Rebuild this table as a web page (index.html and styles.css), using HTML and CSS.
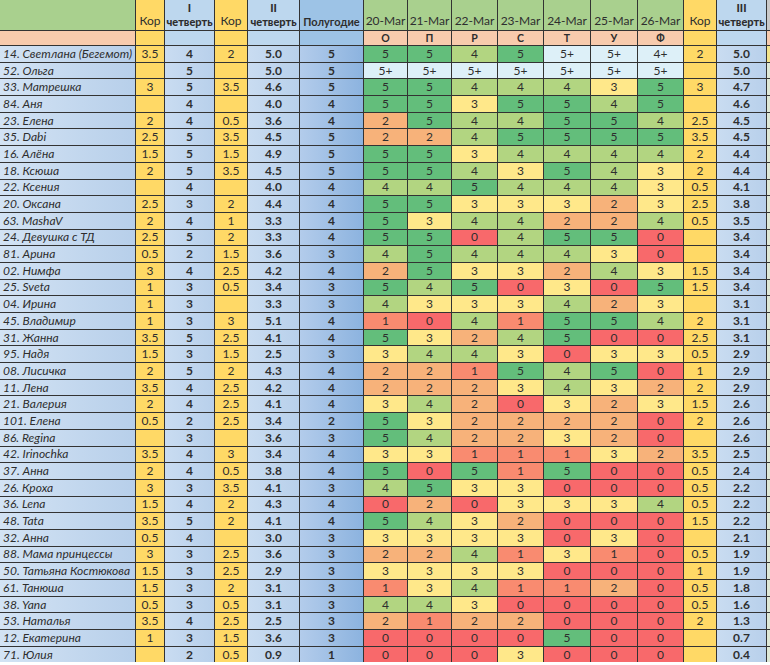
FILE: index.html
```html
<!DOCTYPE html>
<html lang="ru">
<head>
<meta charset="utf-8">
<title>Оценки</title>
<link rel="stylesheet" href="styles.css">
</head>
<body>
<div class="sheet">
<div class="c hn"></div><div class="c hk">Кор</div><div class="c hq"><b>I</b><b>четверть</b></div><div class="c hk">Кор</div><div class="c hq"><b>II</b><b>четверть</b></div><div class="c hp">Полугодие</div><div class="c hd">20-Mar</div><div class="c hd">21-Mar</div><div class="c hd">22-Mar</div><div class="c hd">23-Mar</div><div class="c hd">24-Mar</div><div class="c hd">25-Mar</div><div class="c hd">26-Mar</div><div class="c hk">Кор</div><div class="c hq"><b>III</b><b>четверть</b></div><div class="c hx"></div>
<div class="c on"></div><div class="c ok"></div><div class="c oq"></div><div class="c ok"></div><div class="c oq"></div><div class="c op"></div><div class="c ol">О</div><div class="c ol">П</div><div class="c ol">Р</div><div class="c ol">С</div><div class="c ol">Т</div><div class="c ol">У</div><div class="c ol">Ф</div><div class="c ok"></div><div class="c oq"></div><div class="c ox"></div>

<div class="c n">14. Светлана (Бегемот)</div><div class="c k">3.5</div><div class="c q">4</div><div class="c k">2</div><div class="c q">5.0</div><div class="c p">5</div><div class="c s5">5</div><div class="c s5">5</div><div class="c s4">4</div><div class="c s5">5</div><div class="c sp">5+</div><div class="c sp">5+</div><div class="c sp">4+</div><div class="c k">2</div><div class="c q">5.0</div><div class="c x y"></div>
<div class="c n">52. Ольга</div><div class="c k"></div><div class="c q">5</div><div class="c k"></div><div class="c q">5.0</div><div class="c p">5</div><div class="c sp">5+</div><div class="c sp">5+</div><div class="c sp">5+</div><div class="c sp">5+</div><div class="c sp">5+</div><div class="c sp">5+</div><div class="c sp">5+</div><div class="c k"></div><div class="c q">5.0</div><div class="c x"></div>
<div class="c n">33. Матрешка</div><div class="c k">3</div><div class="c q">5</div><div class="c k">3.5</div><div class="c q">4.6</div><div class="c p">5</div><div class="c s5">5</div><div class="c s5">5</div><div class="c s4">4</div><div class="c s4">4</div><div class="c s4">4</div><div class="c s3">3</div><div class="c s5">5</div><div class="c k">3</div><div class="c q">4.7</div><div class="c x"></div>
<div class="c n">84. Аня</div><div class="c k"></div><div class="c q">4</div><div class="c k"></div><div class="c q">4.0</div><div class="c p">4</div><div class="c s5">5</div><div class="c s5">5</div><div class="c s3">3</div><div class="c s5">5</div><div class="c s5">5</div><div class="c s4">4</div><div class="c s5">5</div><div class="c k"></div><div class="c q">4.6</div><div class="c x"></div>
<div class="c n">23. Елена</div><div class="c k">2</div><div class="c q">4</div><div class="c k">0.5</div><div class="c q">3.6</div><div class="c p">4</div><div class="c s2">2</div><div class="c s5">5</div><div class="c s4">4</div><div class="c s4">4</div><div class="c s5">5</div><div class="c s5">5</div><div class="c s4">4</div><div class="c k">2.5</div><div class="c q">4.5</div><div class="c x"></div>
<div class="c n">35. Dabi</div><div class="c k">2.5</div><div class="c q">5</div><div class="c k">3.5</div><div class="c q">4.5</div><div class="c p">5</div><div class="c s2">2</div><div class="c s2">2</div><div class="c s4">4</div><div class="c s5">5</div><div class="c s5">5</div><div class="c s5">5</div><div class="c s5">5</div><div class="c k">3.5</div><div class="c q">4.5</div><div class="c x"></div>
<div class="c n">16. Алёна</div><div class="c k">1.5</div><div class="c q">5</div><div class="c k">1.5</div><div class="c q">4.9</div><div class="c p">5</div><div class="c s5">5</div><div class="c s5">5</div><div class="c s3">3</div><div class="c s4">4</div><div class="c s4">4</div><div class="c s4">4</div><div class="c s4">4</div><div class="c k">2</div><div class="c q">4.4</div><div class="c x"></div>
<div class="c n">18. Ксюша</div><div class="c k">2</div><div class="c q">5</div><div class="c k">3.5</div><div class="c q">4.5</div><div class="c p">5</div><div class="c s5">5</div><div class="c s5">5</div><div class="c s4">4</div><div class="c s3">3</div><div class="c s5">5</div><div class="c s4">4</div><div class="c s3">3</div><div class="c k">2</div><div class="c q">4.4</div><div class="c x"></div>
<div class="c n">22. Ксения</div><div class="c k"></div><div class="c q">4</div><div class="c k"></div><div class="c q">4.0</div><div class="c p">4</div><div class="c s4">4</div><div class="c s4">4</div><div class="c s5">5</div><div class="c s4">4</div><div class="c s4">4</div><div class="c s4">4</div><div class="c s3">3</div><div class="c k">0.5</div><div class="c q">4.1</div><div class="c x"></div>
<div class="c n">20. Оксана</div><div class="c k">2.5</div><div class="c q">3</div><div class="c k">2</div><div class="c q">4.4</div><div class="c p">4</div><div class="c s5">5</div><div class="c s5">5</div><div class="c s3">3</div><div class="c s3">3</div><div class="c s3">3</div><div class="c s2">2</div><div class="c s3">3</div><div class="c k">2.5</div><div class="c q">3.8</div><div class="c x"></div>
<div class="c n">63. MashaV</div><div class="c k">2</div><div class="c q">4</div><div class="c k">1</div><div class="c q">3.3</div><div class="c p">4</div><div class="c s5">5</div><div class="c s3">3</div><div class="c s4">4</div><div class="c s4">4</div><div class="c s2">2</div><div class="c s2">2</div><div class="c s4">4</div><div class="c k">0.5</div><div class="c q">3.5</div><div class="c x"></div>
<div class="c n">24. Девушка с ТД</div><div class="c k">2.5</div><div class="c q">5</div><div class="c k">2</div><div class="c q">3.3</div><div class="c p">4</div><div class="c s5">5</div><div class="c s5">5</div><div class="c s0">0</div><div class="c s4">4</div><div class="c s5">5</div><div class="c s5">5</div><div class="c s0">0</div><div class="c k"></div><div class="c q">3.4</div><div class="c x"></div>
<div class="c n">81. Арина</div><div class="c k">0.5</div><div class="c q">2</div><div class="c k">1.5</div><div class="c q">3.6</div><div class="c p">3</div><div class="c s4">4</div><div class="c s5">5</div><div class="c s4">4</div><div class="c s4">4</div><div class="c s4">4</div><div class="c s3">3</div><div class="c s0">0</div><div class="c k"></div><div class="c q">3.4</div><div class="c x"></div>
<div class="c n">02. Нимфа</div><div class="c k">3</div><div class="c q">4</div><div class="c k">2.5</div><div class="c q">4.2</div><div class="c p">4</div><div class="c s2">2</div><div class="c s5">5</div><div class="c s3">3</div><div class="c s3">3</div><div class="c s2">2</div><div class="c s4">4</div><div class="c s3">3</div><div class="c k">1.5</div><div class="c q">3.4</div><div class="c x"></div>
<div class="c n">25. Sveta</div><div class="c k">1</div><div class="c q">3</div><div class="c k">0.5</div><div class="c q">3.4</div><div class="c p">3</div><div class="c s5">5</div><div class="c s4">4</div><div class="c s5">5</div><div class="c s0">0</div><div class="c s3">3</div><div class="c s0">0</div><div class="c s5">5</div><div class="c k">1.5</div><div class="c q">3.4</div><div class="c x"></div>
<div class="c n">04. Ирина</div><div class="c k">1</div><div class="c q">3</div><div class="c k"></div><div class="c q">3.3</div><div class="c p">3</div><div class="c s4">4</div><div class="c s3">3</div><div class="c s3">3</div><div class="c s3">3</div><div class="c s4">4</div><div class="c s2">2</div><div class="c s3">3</div><div class="c k"></div><div class="c q">3.1</div><div class="c x"></div>
<div class="c n">45. Владимир</div><div class="c k">1</div><div class="c q">3</div><div class="c k">3</div><div class="c q">5.1</div><div class="c p">4</div><div class="c s1">1</div><div class="c s0">0</div><div class="c s4">4</div><div class="c s1">1</div><div class="c s5">5</div><div class="c s5">5</div><div class="c s4">4</div><div class="c k">2</div><div class="c q">3.1</div><div class="c x"></div>
<div class="c n">31. Жанна</div><div class="c k">3.5</div><div class="c q">5</div><div class="c k">2.5</div><div class="c q">4.1</div><div class="c p">4</div><div class="c s5">5</div><div class="c s3">3</div><div class="c s2">2</div><div class="c s4">4</div><div class="c s5">5</div><div class="c s0">0</div><div class="c s0">0</div><div class="c k">2.5</div><div class="c q">3.1</div><div class="c x"></div>
<div class="c n">95. Надя</div><div class="c k">1.5</div><div class="c q">3</div><div class="c k">1.5</div><div class="c q">2.5</div><div class="c p">3</div><div class="c s3">3</div><div class="c s4">4</div><div class="c s4">4</div><div class="c s3">3</div><div class="c s0">0</div><div class="c s3">3</div><div class="c s3">3</div><div class="c k">0.5</div><div class="c q">2.9</div><div class="c x"></div>
<div class="c n">08. Лисичка</div><div class="c k">2</div><div class="c q">5</div><div class="c k">2</div><div class="c q">4.3</div><div class="c p">4</div><div class="c s2">2</div><div class="c s2">2</div><div class="c s1">1</div><div class="c s5">5</div><div class="c s4">4</div><div class="c s5">5</div><div class="c s0">0</div><div class="c k">1</div><div class="c q">2.9</div><div class="c x"></div>
<div class="c n">11. Лена</div><div class="c k">3.5</div><div class="c q">4</div><div class="c k">2.5</div><div class="c q">4.2</div><div class="c p">4</div><div class="c s2">2</div><div class="c s2">2</div><div class="c s2">2</div><div class="c s3">3</div><div class="c s4">4</div><div class="c s3">3</div><div class="c s2">2</div><div class="c k">2</div><div class="c q">2.9</div><div class="c x"></div>
<div class="c n">21. Валерия</div><div class="c k">2</div><div class="c q">4</div><div class="c k">2.5</div><div class="c q">4.1</div><div class="c p">4</div><div class="c s3">3</div><div class="c s4">4</div><div class="c s2">2</div><div class="c s0">0</div><div class="c s3">3</div><div class="c s2">2</div><div class="c s3">3</div><div class="c k">1.5</div><div class="c q">2.6</div><div class="c x"></div>
<div class="c n">101. Елена</div><div class="c k">0.5</div><div class="c q">2</div><div class="c k">2.5</div><div class="c q">3.4</div><div class="c p">2</div><div class="c s5">5</div><div class="c s3">3</div><div class="c s2">2</div><div class="c s2">2</div><div class="c s2">2</div><div class="c s2">2</div><div class="c s0">0</div><div class="c k">2</div><div class="c q">2.6</div><div class="c x"></div>
<div class="c n">86. Regina</div><div class="c k"></div><div class="c q">3</div><div class="c k"></div><div class="c q">3.6</div><div class="c p">3</div><div class="c s5">5</div><div class="c s4">4</div><div class="c s2">2</div><div class="c s2">2</div><div class="c s3">3</div><div class="c s2">2</div><div class="c s0">0</div><div class="c k"></div><div class="c q">2.6</div><div class="c x"></div>
<div class="c n">42. Irinochka</div><div class="c k">3.5</div><div class="c q">4</div><div class="c k">3</div><div class="c q">3.4</div><div class="c p">4</div><div class="c s3">3</div><div class="c s3">3</div><div class="c s1">1</div><div class="c s1">1</div><div class="c s1">1</div><div class="c s3">3</div><div class="c s2">2</div><div class="c k">3.5</div><div class="c q">2.5</div><div class="c x"></div>
<div class="c n">37. Анна</div><div class="c k">2</div><div class="c q">4</div><div class="c k">0.5</div><div class="c q">3.8</div><div class="c p">4</div><div class="c s5">5</div><div class="c s0">0</div><div class="c s5">5</div><div class="c s1">1</div><div class="c s5">5</div><div class="c s0">0</div><div class="c s0">0</div><div class="c k">0.5</div><div class="c q">2.4</div><div class="c x"></div>
<div class="c n">26. Кроха</div><div class="c k">3</div><div class="c q">3</div><div class="c k">3.5</div><div class="c q">4.1</div><div class="c p">3</div><div class="c s4">4</div><div class="c s5">5</div><div class="c s3">3</div><div class="c s3">3</div><div class="c s0">0</div><div class="c s0">0</div><div class="c s0">0</div><div class="c k">0.5</div><div class="c q">2.2</div><div class="c x"></div>
<div class="c n">36. Lena</div><div class="c k">1.5</div><div class="c q">4</div><div class="c k">2</div><div class="c q">4.3</div><div class="c p">4</div><div class="c s0">0</div><div class="c s2">2</div><div class="c s0">0</div><div class="c s3">3</div><div class="c s3">3</div><div class="c s3">3</div><div class="c s4">4</div><div class="c k">0.5</div><div class="c q">2.2</div><div class="c x"></div>
<div class="c n">48. Tata</div><div class="c k">3.5</div><div class="c q">5</div><div class="c k">2</div><div class="c q">4.1</div><div class="c p">4</div><div class="c s5">5</div><div class="c s4">4</div><div class="c s3">3</div><div class="c s2">2</div><div class="c s0">0</div><div class="c s0">0</div><div class="c s0">0</div><div class="c k">1.5</div><div class="c q">2.2</div><div class="c x"></div>
<div class="c n">32. Анна</div><div class="c k">0.5</div><div class="c q">4</div><div class="c k"></div><div class="c q">3.0</div><div class="c p">3</div><div class="c s3">3</div><div class="c s3">3</div><div class="c s3">3</div><div class="c s3">3</div><div class="c s0">0</div><div class="c s3">3</div><div class="c s0">0</div><div class="c k"></div><div class="c q">2.1</div><div class="c x"></div>
<div class="c n">88. Мама принцессы</div><div class="c k">3</div><div class="c q">3</div><div class="c k">2.5</div><div class="c q">3.6</div><div class="c p">3</div><div class="c s2">2</div><div class="c s2">2</div><div class="c s4">4</div><div class="c s1">1</div><div class="c s3">3</div><div class="c s1">1</div><div class="c s0">0</div><div class="c k">0.5</div><div class="c q">1.9</div><div class="c x"></div>
<div class="c n">50. Татьяна Костюкова</div><div class="c k">1.5</div><div class="c q">3</div><div class="c k">2.5</div><div class="c q">2.9</div><div class="c p">3</div><div class="c s3">3</div><div class="c s3">3</div><div class="c s3">3</div><div class="c s3">3</div><div class="c s0">0</div><div class="c s0">0</div><div class="c s0">0</div><div class="c k">1</div><div class="c q">1.9</div><div class="c x"></div>
<div class="c n">61. Танюша</div><div class="c k">1.5</div><div class="c q">3</div><div class="c k">2</div><div class="c q">3.1</div><div class="c p">3</div><div class="c s1">1</div><div class="c s3">3</div><div class="c s4">4</div><div class="c s1">1</div><div class="c s1">1</div><div class="c s2">2</div><div class="c s0">0</div><div class="c k">0.5</div><div class="c q">1.8</div><div class="c x"></div>
<div class="c n">38. Yana</div><div class="c k">0.5</div><div class="c q">3</div><div class="c k">0.5</div><div class="c q">3.1</div><div class="c p">3</div><div class="c s4">4</div><div class="c s4">4</div><div class="c s3">3</div><div class="c s0">0</div><div class="c s0">0</div><div class="c s0">0</div><div class="c s0">0</div><div class="c k">0.5</div><div class="c q">1.6</div><div class="c x"></div>
<div class="c n">53. Наталья</div><div class="c k">3.5</div><div class="c q">4</div><div class="c k">2.5</div><div class="c q">2.5</div><div class="c p">3</div><div class="c s2">2</div><div class="c s1">1</div><div class="c s2">2</div><div class="c s2">2</div><div class="c s0">0</div><div class="c s0">0</div><div class="c s0">0</div><div class="c k">2</div><div class="c q">1.3</div><div class="c x"></div>
<div class="c n">12. Екатерина</div><div class="c k">1</div><div class="c q">3</div><div class="c k">1.5</div><div class="c q">3.6</div><div class="c p">3</div><div class="c s0">0</div><div class="c s0">0</div><div class="c s0">0</div><div class="c s0">0</div><div class="c s5">5</div><div class="c s0">0</div><div class="c s0">0</div><div class="c k"></div><div class="c q">0.7</div><div class="c x"></div>
<div class="c n">71. Юлия</div><div class="c k"></div><div class="c q">2</div><div class="c k">0.5</div><div class="c q">0.9</div><div class="c p">1</div><div class="c s0">0</div><div class="c s0">0</div><div class="c s0">0</div><div class="c s3">3</div><div class="c s0">0</div><div class="c s0">0</div><div class="c s0">0</div><div class="c k"></div><div class="c q">0.4</div><div class="c x"></div>
</div>
</body>
</html>
```

FILE: styles.css
```css
html, body {
  margin: 0;
  padding: 0;
  background: #ffffff;
}

.sheet {
  display: grid;
  grid-template-columns: 135px 28px 49px 32px 51px 63px 43px 43px 45px 45px 46px 46px 45px 32px 49px 3px;
  grid-template-rows: 30px 14px repeat(37, 15.7px);
  gap: 1px;
  width: 770px;
  background: #333333;
  font-family: Lato, "Open Sans", sans-serif;
  font-size: 12px;
  color: #2e2e2e;
  overflow: hidden;
}

.c {
  display: flex;
  align-items: center;
  justify-content: center;
  overflow: hidden;
  white-space: nowrap;
  line-height: 1;
}

/* header row 1 */
.hn { background: #a9d08e; }
.hk { background: #ffd966; align-items: flex-end; padding-bottom: 3px; }
.hq {
  background: #bdd7ee;
  flex-direction: column;
  justify-content: flex-end;
  align-items: center;
  gap: 3px;
  padding-bottom: 3px;
  font-weight: 700;
  font-size: 11px;
}
.hq b { display: block; }
.hp { background: #9dc3e6; align-items: flex-end; padding-bottom: 3px; font-weight: 700; font-size: 11px; }
.hd { background: #a9d08e; align-items: flex-end; padding-bottom: 3px; }
.hx { background: #c9c9c9; }

/* header row 2 */
.on { background: #f8cbad; }
.ok { background: #ffd966; }
.oq { background: #bdd7ee; }
.op { background: #9dc3e6; }
.ol { background: #f8cbad; font-weight: 700; font-size: 10.5px; }
.ox { background: #f8cbad; }

/* data */
.n {
  justify-content: flex-start;
  padding-left: 3px;
  font-style: italic;
  background: linear-gradient(to right, #d3e3f4, #b7cfea);
}
.k { background: #ffd966; }
.q { background: linear-gradient(to right, #c9dcf1, #b8d0eb); font-weight: 700; }
.p { background: linear-gradient(to right, #b3cceb, #8cb3df); font-weight: 700; }
.x { background: #dfe9d6; }
.y { background: #f3e48a; }

.s0 { background: #f8696b; }
.s1 { background: #f98b70; }
.s2 { background: #f7b27a; }
.s3 { background: #ffe88a; }
.s4 { background: #b2d581; }
.s5 { background: #63be7b; }
.sp { background: #ddf0f8; }
```
